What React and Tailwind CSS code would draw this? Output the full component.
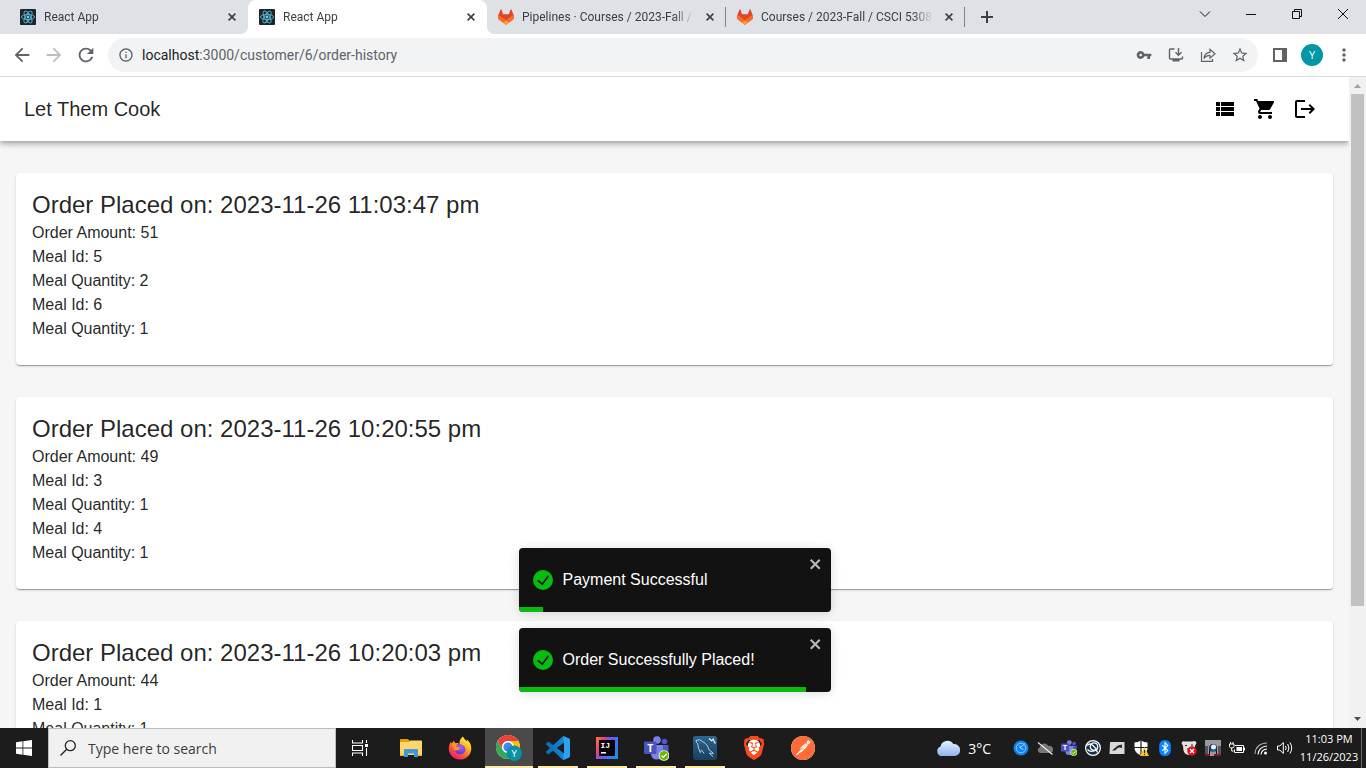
import { MdArrowBack, MdArrowForward, MdRefresh, MdInfoOutline, MdVpnKey, MdStarBorder, MdMoreVert, MdViewList, MdShoppingCart, MdLogout } from "react-icons/md";
import { SiPostman, SiBrave } from "react-icons/si";

const orders = [
  {
    placed: "2023-11-26 11:03:47 pm",
    amount: 51,
    meals: [{ id: 5, quantity: 2 }, { id: 6, quantity: 1 }],
  },
  {
    placed: "2023-11-26 10:20:55 pm",
    amount: 49,
    meals: [{ id: 3, quantity: 1 }, { id: 4, quantity: 1 }],
  },
  {
    placed: "2023-11-26 10:20:03 pm",
    amount: 44,
    meals: [{ id: 1, quantity: 1 }],
  },
];

function ReactFavicon() {
  return (
    <svg viewBox="0 0 16 16" className="size-4 shrink-0">
      <rect width="16" height="16" rx="1" fill="#20232a" />
      <g fill="none" stroke="#53b9d6" strokeWidth="0.9">
        <ellipse cx="8" cy="8" rx="6.6" ry="2.6" />
        <ellipse cx="8" cy="8" rx="6.6" ry="2.6" transform="rotate(60 8 8)" />
        <ellipse cx="8" cy="8" rx="6.6" ry="2.6" transform="rotate(120 8 8)" />
      </g>
      <circle cx="8" cy="8" r="1.4" fill="#61dafb" />
    </svg>
  );
}

function GitlabFavicon() {
  return (
    <svg viewBox="0 2 32 32" className="size-4 shrink-0">
      <path fill="#E24329" d="m31.46 14.78-.04-.12-4.35-11.35A1.14 1.14 0 0 0 25.94 2.6c-.24 0-.47.1-.66.24-.19.15-.33.36-.39.6l-2.94 9h-11.9l-2.94-9A1.14 1.14 0 0 0 6.07 2.58a1.15 1.15 0 0 0-1.14.72L.58 14.68l-.05.11a8.1 8.1 0 0 0 2.68 9.34l.02.01.04.03 6.63 4.97 3.28 2.48 2 1.52a1.35 1.35 0 0 0 1.62 0l2-1.52 3.28-2.48 6.67-5h.02a8.09 8.09 0 0 0 2.7-9.36Z" />
      <path fill="#FC6D26" d="m31.46 14.78-.04-.12a14.75 14.75 0 0 0-5.86 2.64l-9.55 7.24 6.09 4.6 6.67-5h.02a8.09 8.09 0 0 0 2.67-9.36Z" />
      <path fill="#FCA326" d="m9.9 29.14 3.28 2.48 2 1.52a1.35 1.35 0 0 0 1.62 0l2-1.52 3.28-2.48-6.1-4.6-6.07 4.6Z" />
      <path fill="#FC6D26" d="M6.44 17.3a14.71 14.71 0 0 0-5.86-2.63l-.05.12a8.1 8.1 0 0 0 2.68 9.34l.02.01.04.03 6.63 4.97 6.1-4.6-9.56-7.24Z" />
    </svg>
  );
}

function Tab({ title, icon, active, divided }) {
  const shape = active
    ? "relative flex h-full w-[239px] items-center gap-2 rounded-t-lg bg-white pl-[11px] pr-2"
    : "relative flex h-full w-[239px] items-center gap-2 pl-[11px] pr-2";
  return (
    <div role="tab" aria-selected={!!active} className={shape}>
      {active && <span className="absolute bottom-0 -left-2 size-2 bg-[radial-gradient(circle_at_0_0,transparent_8px,#fff_8px)]" />}
      {active && <span className="absolute bottom-0 -right-2 size-2 bg-[radial-gradient(circle_at_100%_0,transparent_8px,#fff_8px)]" />}
      {divided && <span className="absolute right-0 h-5 w-px bg-[#808387]" />}
      {icon}
      <span className="min-w-0 flex-1 overflow-hidden whitespace-nowrap font-['Roboto',sans-serif] text-[12px] text-[#3c4043] [mask-image:linear-gradient(to_right,#000_88%,transparent)]">
        {title}
      </span>
      <button aria-label={"Close " + title} className="flex size-4 shrink-0 items-center justify-center">
        <svg viewBox="0 0 8 8" className="size-2" stroke="#3c4043" strokeWidth="1.6">
          <path d="M.6.6l6.8 6.8M7.4.6L.6 7.4" />
        </svg>
      </button>
    </div>
  );
}

function WindowButton({ label, children }) {
  return (
    <button aria-label={label} className="flex h-7 w-[46px] items-center justify-center">
      <svg viewBox="0 0 12 12" className="size-3" fill="none" stroke="#111" strokeWidth="1">
        {children}
      </svg>
    </button>
  );
}

function TabStrip() {
  return (
    <div className="flex h-[34px] shrink-0 bg-[#dee1e6] pl-[9px]">
      <div role="tablist" className="flex">
        <Tab title="React App" icon={<ReactFavicon />} />
        <Tab title="React App" icon={<ReactFavicon />} active />
        <Tab title="Pipelines · Courses / 2023-Fall / C" icon={<GitlabFavicon />} divided />
        <Tab title="Courses / 2023-Fall / CSCI 5308 /" icon={<GitlabFavicon />} divided />
      </div>
      <button aria-label="New tab" className="flex w-11 items-center justify-center">
        <svg viewBox="0 0 12 12" className="size-3" stroke="#3c4043" strokeWidth="2">
          <path d="M6 0v12M0 6h12" />
        </svg>
      </button>
      <div className="ml-auto flex">
        <WindowButton label="Search tabs"><path d="M1 3.5l5 5 5-5" /></WindowButton>
        <WindowButton label="Minimize"><path d="M1 6.5h10" /></WindowButton>
        <WindowButton label="Restore"><path d="M1.500 3.500h7v7h-7zM3.500 3.500v-2h7v7h-2" /></WindowButton>
        <WindowButton label="Close window"><path d="M1 1l10 10M11 1L1 11" /></WindowButton>
      </div>
    </div>
  );
}

function ToolButton({ label, children }) {
  return (
    <button aria-label={label} className="flex h-8 w-8 shrink-0 items-center justify-center text-[#5f6368]">
      {children}
    </button>
  );
}

function Toolbar() {
  return (
    <div className="flex shrink-0 items-center border-b border-[#d9dbde] bg-white py-1 pl-1.5 pr-1.5">
      <ToolButton label="Back"><MdArrowBack className="size-[22px]" /></ToolButton>
      <ToolButton label="Forward"><MdArrowForward className="size-[22px] text-[#bbbdbf]" /></ToolButton>
      <ToolButton label="Reload"><MdRefresh className="size-[22px]" /></ToolButton>
      <div className="ml-1.5 mr-1.5 flex h-[34px] flex-1 items-center rounded-full bg-[#f1f3f4] pl-2.5 pr-0.5">
        <MdInfoOutline className="size-4 shrink-0 text-[#5f6368]" />
        <a href="#address" className="ml-2 flex-1 font-['Roboto',sans-serif] text-[14px] text-[#5f6368]">
          <span className="text-[#202124]">localhost</span>:3000/customer/6/order-history
        </a>
        <ToolButton label="Passwords"><MdVpnKey className="size-4" /></ToolButton>
        <ToolButton label="Install app">
          <svg viewBox="0 0 16 16" className="size-4" fill="none" stroke="currentColor" strokeWidth="1.400">
            <path d="M6.500 2H2.200q-.7 0-.7.7v8.600q0 .7.7.7h11.600q.7 0 .7-.7V9.500" />
            <path d="M10.500 1v7M7.500 5.200l3 3 3-3" />
            <path d="M4.500 13.300h7" strokeWidth="2.400" />
          </svg>
        </ToolButton>
        <ToolButton label="Share">
          <svg viewBox="0 0 16 16" className="size-4" fill="none" stroke="currentColor" strokeWidth="1.200">
            <path d="M1.500 5v9.400h11V12" />
            <path d="M4 11.500c.4-3.900 2.600-6 6-6.200V2.400l5 4.400-5 4.300V8.300c-2.600 0-4.500.9-6 3.200z" />
          </svg>
        </ToolButton>
        <ToolButton label="Bookmark this page"><MdStarBorder className="size-[18px]" /></ToolButton>
      </div>
      <ToolButton label="Side panel">
        <svg viewBox="0 0 14 14" className="size-3.5" fill="currentColor">
          <path fillRule="evenodd" d="M0 0h14v14H0zM2 2v10h7V2z" />
        </svg>
      </ToolButton>
      <ToolButton label="Profile">
        <span className="flex size-[22px] items-center justify-center rounded-full bg-[#0097a7] text-[11px] text-white">Y</span>
      </ToolButton>
      <ToolButton label="Chrome menu"><MdMoreVert className="size-5" /></ToolButton>
    </div>
  );
}

function AppHeader() {
  return (
    <header className="z-10 flex h-16 shrink-0 items-center bg-white px-6 shadow-[0_2px_4px_-1px_rgba(0,0,0,0.2),0_4px_5px_0_rgba(0,0,0,0.14),0_1px_10px_0_rgba(0,0,0,0.12)]">
      <h1 className="flex-1 text-[20px] leading-8 text-black/87">Let Them Cook</h1>
      <nav className="flex text-black">
        <button aria-label="Order history" className="p-2"><MdViewList className="size-6" /></button>
        <button aria-label="Cart" className="p-2"><MdShoppingCart className="size-6" /></button>
        <button aria-label="Log out" className="p-2"><MdLogout className="size-6" /></button>
      </nav>
    </header>
  );
}

function OrderCard({ order }) {
  return (
    <article className="shrink-0 rounded bg-white px-4 pb-6 pt-4 text-[16px] leading-6 text-black/87 shadow-[0_2px_1px_-1px_rgba(0,0,0,0.2),0_1px_1px_0_rgba(0,0,0,0.14),0_1px_3px_0_rgba(0,0,0,0.12)]">
      <h2 className="text-[24px] leading-8">Order Placed on: {order.placed}</h2>
      <p>Order Amount: {order.amount}</p>
      {order.meals.map((meal) => (
        <div key={meal.id}>
          <p>Meal Id: {meal.id}</p>
          <p>Meal Quantity: {meal.quantity}</p>
        </div>
      ))}
    </article>
  );
}

function Toast({ text, progress }) {
  return (
    <div role="alert" className="relative flex h-16 w-[312px] items-center overflow-hidden rounded bg-[#121212] px-3.5 shadow-[0_1px_10px_0_rgba(0,0,0,0.1),0_2px_15px_0_rgba(0,0,0,0.05)]">
      <svg viewBox="0 0 24 24" className="size-5 shrink-0" fill="#07bc0c">
        <path d="M12 0a12 12 0 1012 12A12.014 12.014 0 0012 0zm6.927 8.200l-6.845 9.289a1.011 1.011 0 01-1.430.188l-4.888-3.908a1 1 0 111.250-1.562l4.076 3.261 6.227-8.451a1 1 0 111.610 1.183z" />
      </svg>
      <p className="ml-2.5 flex-1 text-[16px] leading-6 text-white">{text}</p>
      <button aria-label={"Dismiss " + text} className="absolute right-2 top-2 text-white/70">
        <svg viewBox="0 0 14 16" className="h-4 w-3.5" fill="currentColor">
          <path fillRule="evenodd" d="M7.710 8.230l3.750 3.750-1.480 1.480-3.750-3.750-3.750 3.750L1 11.980l3.750-3.750L1 4.480 2.480 3l3.750 3.750L9.980 3l1.480 1.480-3.750 3.750z" />
        </svg>
      </button>
      <div className="absolute bottom-0 left-0 h-[5px] bg-[#07bc0c]" style={{ width: progress + "%" }} />
    </div>
  );
}

function Scrollbar() {
  return (
    <div aria-hidden="true" className="flex w-[17px] shrink-0 flex-col items-center bg-[#f1f1f1]">
      <svg viewBox="0 0 17 17" className="h-[17px] w-[17px]"><path d="M5 11l3.500-4 3.500 4z" fill="#a3a3a3" /></svg>
      <div className="flex w-[13px] flex-1 flex-col"><div className="h-[83%] bg-[#c1c1c1]" /></div>
      <svg viewBox="0 0 17 17" className="h-[17px] w-[17px]"><path d="M5 6h7l-3.500 4z" fill="#505050" /></svg>
    </div>
  );
}

function TaskbarApp({ label, active, running, children }) {
  return (
    <button aria-label={label} className={active ? "relative flex h-full w-12 items-center justify-center bg-[#4a4a4a]" : "relative flex h-full w-12 items-center justify-center"}>
      {children}
      {running && <span className={active ? "absolute inset-x-0 bottom-0 h-0.5 bg-[#fdeaa8]" : "absolute inset-x-1 bottom-0 h-0.5 bg-[#fdeaa8]"} />}
    </button>
  );
}

function FolderIcon() {
  return (
    <svg viewBox="0 0 22 18" className="h-[18px] w-[22px]">
      <path d="M0 1q0-1 1-1h7l2 2H22v5H0z" fill="#e3a005" />
      <path d="M0 3h9l1.500-1.500H21q1 0 1 1V16H0z" fill="#ffd667" />
      <path d="M4 18v-7q0-1 1-1h12q1 0 1 1v7h-4v-3.500H8V18z" fill="#3f98dd" />
      <path d="M0 15.500h4V17H0zM18 15.500h4V17h-4z" fill="#efb52f" />
    </svg>
  );
}

function FirefoxIcon() {
  return (
    <svg viewBox="0 0 24 24" className="size-6">
      <defs>
        <linearGradient id="ffBody" x1="0.850" y1="0.100" x2="0.250" y2="1">
          <stop offset="0" stopColor="#fff44f" />
          <stop offset="0.350" stopColor="#ffae1e" />
          <stop offset="0.650" stopColor="#ff5a36" />
          <stop offset="1" stopColor="#f0107c" />
        </linearGradient>
        <radialGradient id="ffGlobe" cx="0.600" cy="0.300" r="0.800">
          <stop offset="0" stopColor="#a85cff" />
          <stop offset="1" stopColor="#5537c9" />
        </radialGradient>
      </defs>
      <path fill="url(#ffBody)" d="M15 .4c1 2.200 2.300 3.300 3.900 5-.1-.8-.3-1.500-.6-2.100 3 1.900 5 5.100 5 9.200 0 6.200-4.900 11.100-11.200 11.100S.8 18.800.8 12.800c0-3.300.9-5.500 2.300-7.100 0 .8.100 1.300.4 1.800L6 4.800c.2 1 .6 1.700 1.300 2.300 1.800-.3 3.300.1 4.200.9C11.200 4.900 12.400 2.200 15 .4z" />
      <path fill="url(#ffGlobe)" d="M7 9.500c1.300-1.500 4-1.800 6-1 2.700.7 4.400 2.500 4.400 5 0 2.800-2.300 4.800-5 4.800-3.300 0-5.300-2.200-5.300-4.600 1 .8 2.400.8 3.600.2l1.400-1c-.5-1.200-1.900-1.200-3.600-1.300C7.700 11.500 7 10.700 7 9.500z" />
      <path fill="#ff9529" d="M4.300 8.500c2.400-1 4.700-.2 5.800.9-1.300.1-1.900.8-1.800 1.700 1.500.1 3.300.1 3.700.9-.3.900-1.600 1.700-2.700 2.100-1.200.4-2.300.1-3.100-.4-.5-.9-1.300-3-1.900-5.200z" />
    </svg>
  );
}

function ChromeIcon() {
  return (
    <svg viewBox="0 0 26 26" className="size-[26px]">
      <circle cx="12" cy="12" r="12" fill="#fff" />
      <path fill="#ea4335" d="M1.600 6A12 12 0 0 1 22.400 6H12a6 6 0 0 0-5.200 9z" />
      <path fill="#34a853" d="M1.600 6A12 12 0 0 0 12 24l5.200-9A6 6 0 0 1 6.800 15z" />
      <path fill="#fbbc04" d="M22.400 6A12 12 0 0 1 12 24l5.200-9A6 6 0 0 0 12 6z" />
      <circle cx="12" cy="12" r="5.800" fill="#fff" />
      <circle cx="12" cy="12" r="4.600" fill="#4285f4" />
      <circle cx="18.200" cy="18.200" r="7.700" fill="#0b919f" />
      <text x="18.200" y="21.700" textAnchor="middle" fontSize="9.500" fill="#fff" fontFamily="Open Sans, sans-serif">Y</text>
    </svg>
  );
}

function VsCodeIcon() {
  return (
    <svg viewBox="0 0 24 24" className="size-6">
      <defs>
        <linearGradient id="vsBlue" x1="0" x2="1">
          <stop offset="0" stopColor="#0b6cb4" />
          <stop offset="0.700" stopColor="#1484d0" />
          <stop offset="0.760" stopColor="#2ba2f1" />
          <stop offset="1" stopColor="#2ba2f1" />
        </linearGradient>
      </defs>
      <path fill="url(#vsBlue)" d="M23.150 2.587L18.210.210a1.494 1.494 0 0 0-1.705.290l-9.460 8.630-4.120-3.128a.999.999 0 0 0-1.276.057L.327 7.261A1 1 0 0 0 .326 8.740L3.899 12 .326 15.260a1 1 0 0 0 .001 1.479L1.650 17.940a.999.999 0 0 0 1.276.057l4.120-3.128 9.460 8.630a1.492 1.492 0 0 0 1.704.290l4.942-2.377A1.500 1.500 0 0 0 24 20.060V3.939a1.500 1.500 0 0 0-.850-1.352zm-5.146 14.861L10.826 12l7.178-5.448v10.896z" />
    </svg>
  );
}

function IntellijIcon() {
  return (
    <svg viewBox="0 0 22 22" className="h-[22px] w-[22px]">
      <defs>
        <linearGradient id="ijEdge" x1="0" y1="0.200" x2="1" y2="0.700">
          <stop offset="0" stopColor="#fc6d3a" />
          <stop offset="0.250" stopColor="#e0408a" />
          <stop offset="0.500" stopColor="#6b57ff" />
          <stop offset="1" stopColor="#1590ef" />
        </linearGradient>
      </defs>
      <rect width="22" height="22" fill="url(#ijEdge)" />
      <rect x="3" y="3" width="16" height="16" fill="#0b0208" />
      <text x="4.500" y="11" fontSize="8" fontWeight="700" fill="#fff" fontFamily="Liberation Mono, monospace">IJ</text>
      <path d="M5 15.800h5" stroke="#fff" strokeWidth="1.500" />
    </svg>
  );
}

function TeamsIcon({ className }) {
  return (
    <svg viewBox="0 0 25 25" className={className}>
      <circle cx="20.500" cy="5.500" r="2.800" fill="#5059c9" />
      <path d="M17 9h7.500v7q0 4-4 4H17z" fill="#5059c9" />
      <circle cx="13" cy="4" r="3.800" fill="#7b83eb" />
      <path d="M7 9h12v8.500q0 6-6 6t-6-6z" fill="#7b83eb" />
      <rect x="0" y="5.500" width="12.500" height="12.500" rx="1" fill="#4b53bc" />
      <text x="6.200" y="15.600" textAnchor="middle" fontSize="10.500" fontWeight="700" fill="#fff" fontFamily="Open Sans, sans-serif">T</text>
      <circle cx="20" cy="19.500" r="5.300" fill="#fff" />
      <circle cx="20" cy="19.500" r="4.500" fill="#6bb700" />
      <path d="M17.500 19.600l1.800 1.800 3.200-3.400" fill="none" stroke="#fff" strokeWidth="1.300" />
    </svg>
  );
}

function WorkbenchIcon() {
  return (
    <svg viewBox="0 0 24 24" className="size-6">
      <defs>
        <linearGradient id="wbBlue" x1="0" y1="0" x2="0" y2="1">
          <stop offset="0" stopColor="#2f6690" />
          <stop offset="1" stopColor="#16405f" />
        </linearGradient>
      </defs>
      <rect width="24" height="24" rx="2.500" fill="url(#wbBlue)" />
      <path d="M3 4.500q3.500-2 6.500 1c4 2.400 5.300 4.200 6.600 8.500q2.400 1.300 4.400 3.500l-4-.5q1 2 3.500 3.500M3 4.500q.2 2.200 1.800 3.300Q5 12 7.300 16.500l1.200-2.300q1.500 1 2.500 3.300M7 6.600l.5.500" fill="none" stroke="#c9dae6" strokeWidth="0.900" />
      <path d="M16 2.500l2.500 2.200 1.700-1.700 1 3 1.300 1.500" fill="none" stroke="#e8f0f6" strokeWidth="1.200" />
    </svg>
  );
}

function BraveIcon() {
  return (
    <span className="relative flex size-6 items-center justify-center">
      <svg viewBox="0 0 24 24" className="absolute size-6"><ellipse cx="12" cy="11.500" rx="6.500" ry="8.500" fill="#fff" /></svg>
      <SiBrave className="relative size-6 text-[#fb4a1d]" />
    </span>
  );
}

function PostmanIcon() {
  return (
    <span className="flex size-6 items-center justify-center rounded-full bg-white">
      <SiPostman className="size-6 text-[#ff6c37]" />
    </span>
  );
}

const trayIcons = [
  {
    label: "Sync client",
    art: (
      <>
        <circle cx="8" cy="8" r="7.500" fill="#0a84f5" />
        <circle cx="8" cy="8" r="4.800" fill="none" stroke="#9fd0ff" strokeWidth="0.900" />
        <path d="M12 3.500L7 8l3.500 1.500M7 8V5.500" fill="none" stroke="#b5dbff" strokeWidth="0.900" />
      </>
    ),
  },
  {
    label: "OneDrive offline",
    art: (
      <>
        <path d="M3 13a3 3 0 0 1 0-5.800A4.500 4.500 0 0 1 11.500 6 3.600 3.600 0 0 1 13.500 13z" fill="#777" />
        <path d="M1 2.500l14.500 12" stroke="#eee" strokeWidth="1.100" />
      </>
    ),
  },
  { label: "Teams", teams: true },
  {
    label: "Swirl",
    art: (
      <>
        <circle cx="8" cy="8" r="7.400" fill="#16304f" stroke="#fff" strokeWidth="1.200" />
        <g fill="none" stroke="#fff" strokeWidth="1.300">
          <circle cx="9" cy="6.600" r="3.700" />
          <path d="M2.300 5.500Q4.500 2.500 8 5.500t4.500 7M2.500 9.500Q6 13.500 12.500 9" />
        </g>
      </>
    ),
  },
  {
    label: "Touchpad",
    art: (
      <>
        <path d="M1 2.500q0-.5.500-.5h14v12H.5z" fill="#d9d9d9" />
        <path d="M3 10.500l3.500-3Q8 5 13 4.500V8L9.500 7.500 6 10.500z" fill="#2a2a2a" />
      </>
    ),
  },
  {
    label: "Security warning",
    art: (
      <>
        <path d="M8 .5q3 2 6.500 2V8q0 5-6.500 7.500Q1.500 13 1.500 8V2.500Q5 2.500 8 .5z" fill="#fff" />
        <path d="M8 0v15.500M1 7.500h14" stroke="#1c1c1c" strokeWidth="1.200" />
        <path d="M11.500 7L16 16H7z" fill="#fbc02d" />
        <path d="M11.500 10v3M11.500 14v1" stroke="#222" strokeWidth="1" />
      </>
    ),
  },
  {
    label: "Bluetooth",
    art: (
      <>
        <rect x="2.200" y="0" width="11.600" height="16" rx="5.500" fill="#0a84ff" />
        <path d="M5.200 5.200l5.600 5.400L8 13.300V2.700l2.800 2.700-5.600 5.400" fill="none" stroke="#fff" strokeWidth="1.100" />
      </>
    ),
  },
  {
    label: "Disconnected service",
    art: (
      <>
        <path d="M.5 3Q1 .5 4 1.500h7Q15 0 15.500 3L14 6v5q-2 4-6 4-4.500-.500-5.500-4.500L2 6z" fill="#e6e3df" />
        <path d="M4 5.500h2M10 5h2M6 9h2.500" stroke="#222" strokeWidth="1.200" />
        <circle cx="11" cy="11" r="4.700" fill="#e0101f" />
        <path d="M9 9l4 4M13 9l-4 4" stroke="#fff" strokeWidth="1.300" />
      </>
    ),
  },
  {
    label: "Media utility",
    art: (
      <>
        <rect width="16" height="16" fill="#9a9a9a" />
        <path d="M0 6h3v8H0zM13 6h3v8h-3z" fill="#555" />
        <path d="M4 7h1v7H4zM11 7h1v7h-1z" fill="#111" />
        <path d="M0 14h5v2H0zM9 14h7v2H9z" fill="#8c1226" />
        <circle cx="8" cy="8" r="4" fill="#23357c" />
        <circle cx="8.500" cy="7" r="2.500" fill="#dff6ff" />
        <path d="M6 11h4" stroke="#18a06a" strokeWidth="1.200" />
      </>
    ),
  },
  {
    label: "Battery",
    art: (
      <>
        <path d="M6 5.500h8.500v7h-9V9.500" fill="none" stroke="#fff" strokeWidth="1" />
        <path d="M7.500 7H13v4H7.500zM15 7.500h1v3h-1z" fill="#fff" />
        <path d="M.5 4h4.500v2.500q0 1.500-2.200 1.500T.5 6.500zM1.500 2v2M4 2v2M2.700 8v3h2" fill="none" stroke="#fff" strokeWidth="1" />
      </>
    ),
  },
  {
    label: "Wi-Fi",
    art: (
      <g fill="none" strokeWidth="1.100">
        <path d="M2 14Q2.500 3.500 14 3" stroke="#aaa" />
        <path d="M5 14.500Q5.500 7 14 6" stroke="#fff" />
        <path d="M8 14.500q.5-5 6-5.500" stroke="#fff" />
        <circle cx="12.500" cy="13" r="1.500" fill="#fff" />
      </g>
    ),
  },
  {
    label: "Volume",
    art: (
      <g fill="none" stroke="#fff" strokeWidth="1">
        <path d="M.5 6h2.300L6.300 2.500v11L2.800 10H.5z" />
        <path d="M8.500 6q1.200 2 0 4M10.700 4q2.400 4 0 8M13 2.500q3.400 5.500 0 11" />
      </g>
    ),
  },
];

function Taskbar() {
  return (
    <footer className="flex h-10 shrink-0 items-center bg-[#1c1c1c] text-white">
      <button aria-label="Start" className="flex h-full w-12 items-center justify-center">
        <svg viewBox="0 0 16 16" className="size-4" fill="#fff">
          <path d="M0 2.200l6.500-.9v6.300H0zM7.300 1.200L16 0v7.600H7.300zM0 8.400h6.500v6.300L0 13.800zM7.300 8.400H16V16l-8.700-1.200z" />
        </svg>
      </button>
      <label className="flex h-full w-72 items-center gap-3 border border-[#bdbdbd] bg-[#f1f1f1] pl-[11px]">
        <svg viewBox="0 0 16 16" className="size-4 shrink-0" fill="none" stroke="#222" strokeWidth="1.300">
          <circle cx="10.300" cy="5.700" r="5" />
          <path d="M6.700 9.300L.5 15.500" />
        </svg>
        <input aria-label="Search" placeholder="Type here to search" className="w-full bg-transparent text-[14px] text-[#333] outline-none placeholder:text-[#3d3d3d]" />
      </label>
      <button aria-label="Task view" className="mr-[3px] flex h-full w-12 items-center justify-center">
        <svg viewBox="0 0 16 16" className="size-4" fill="none" stroke="#fff" strokeWidth="1.100">
          <path d="M.5 0v3h10V0M.5 16v-3h10v3M.5 5.500h10v5H.5zM14.500 0v3M14.500 8v8" />
          <path d="M13 4h3v3h-3z" fill="#fff" stroke="none" />
        </svg>
      </button>
      <div className="flex h-full gap-px">
        <TaskbarApp label="File Explorer"><FolderIcon /></TaskbarApp>
        <TaskbarApp label="Firefox"><FirefoxIcon /></TaskbarApp>
        <TaskbarApp label="Chrome" active running><ChromeIcon /></TaskbarApp>
        <TaskbarApp label="Visual Studio Code" running><VsCodeIcon /></TaskbarApp>
        <TaskbarApp label="IntelliJ IDEA" running><IntellijIcon /></TaskbarApp>
        <TaskbarApp label="Microsoft Teams" running><TeamsIcon className="size-[25px]" /></TaskbarApp>
        <TaskbarApp label="MySQL Workbench" running><WorkbenchIcon /></TaskbarApp>
        <TaskbarApp label="Brave"><BraveIcon /></TaskbarApp>
        <TaskbarApp label="Postman"><PostmanIcon /></TaskbarApp>
      </div>
      <button className="ml-auto flex h-full items-center gap-2 pr-[18px] text-[14px]">
        <svg viewBox="0 0 24 16" className="h-4 w-6">
          <defs>
            <linearGradient id="cloudFill" x1="0" y1="0" x2="0" y2="1">
              <stop offset="0" stopColor="#e6f0ff" />
              <stop offset="1" stopColor="#8fb4ee" />
            </linearGradient>
          </defs>
          <path fill="url(#cloudFill)" d="M5 16A5 5 0 0 1 4.500 6.500 7 7 0 0 1 17.300 4 6 6 0 0 1 19 16z" />
        </svg>
        3°C
      </button>
      <div className="flex h-full">
        {trayIcons.map((item) => (
          <button key={item.label} aria-label={item.label} className="flex w-6 items-center justify-center">
            {item.teams ? <TeamsIcon className="size-4" /> : <svg viewBox="0 0 16 16" className="size-4">{item.art}</svg>}
          </button>
        ))}
      </div>
      <button className="flex h-full w-16 flex-col items-center justify-center whitespace-nowrap text-[11px] leading-[18px]">
        <span>11:03 PM</span>
        <span>11/26/2023</span>
      </button>
      <div className="h-full w-[5px] border-l border-[#6a6a6a]" />
    </footer>
  );
}

export default function App() {
  return (
    <div className="flex h-screen flex-col overflow-hidden bg-white font-['Open_Sans',sans-serif]">
      <TabStrip />
      <Toolbar />
      <div className="flex min-h-0 flex-1 font-['Liberation_Sans',Arial,sans-serif]">
        <div className="relative flex min-w-0 flex-1 flex-col overflow-hidden bg-[#f6f6f6]">
          <AppHeader />
          <main className="flex min-h-0 flex-1 flex-col gap-8 overflow-hidden px-4 pt-8">
            {orders.map((order) => (
              <OrderCard key={order.placed} order={order} />
            ))}
          </main>
          <div className="absolute bottom-9 left-1/2 z-20 flex -translate-x-1/2 flex-col gap-4">
            <Toast text="Payment Successful" progress={8} />
            <Toast text="Order Successfully Placed!" progress={92} />
          </div>
        </div>
        <Scrollbar />
      </div>
      <Taskbar />
    </div>
  );
}
